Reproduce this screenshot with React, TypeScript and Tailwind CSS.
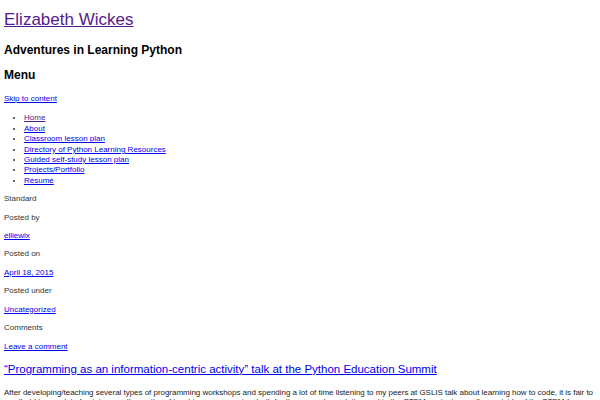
export default function App() {
  const menu = [
    { label: 'Home', visited: true },
    { label: 'About' },
    { label: 'Classroom lesson plan' },
    { label: 'Directory of Python Learning Resources' },
    { label: 'Guided self-study lesson plan' },
    { label: 'Projects/Portfolio' },
    { label: 'Résumé' },
  ];

  const meta = [
    { label: 'Posted by', link: 'elliewix' },
    { label: 'Posted on', link: 'April 18, 2015' },
    { label: 'Posted under', link: 'Uncategorized' },
    { label: 'Comments', link: 'Leave a comment' },
  ];

  return (
    <div className="w-[600px] h-[400px] overflow-hidden bg-white px-1 text-[8px] leading-[10.4px] text-[#333] font-['Liberation_Sans',Arial,sans-serif]">
      <header>
        <h1 className="mt-[9px] text-[17px] leading-[22px]">
          <a href="#" className="text-[#551a8b] underline">Elizabeth Wickes</a>
        </h1>
        <h2 className="mt-[12px] text-[12px] leading-[15px] font-bold text-black">Adventures in Learning Python</h2>
        <h3 className="mt-[10px] text-[12px] leading-[15px] font-bold text-black">Menu</h3>
        <p className="mt-[11px]">
          <a href="#" className="text-[#0000ee] underline">Skip to content</a>
        </p>
        <ul className="mt-[9px] mb-2 pl-[20px] list-disc">
          {menu.map((m) => (
            <li key={m.label}>
              <a href="#" className={m.visited ? 'text-[#551a8b] underline' : 'text-[#0000ee] underline'}>
                {m.label}
              </a>
            </li>
          ))}
        </ul>
      </header>

      <article>
        <p className="my-2">Standard</p>
        {meta.map((m) => (
          <div key={m.label}>
            <p className="my-2">{m.label}</p>
            <p className="my-2">
              <a href="#" className="text-[#0000ee] underline">{m.link}</a>
            </p>
          </div>
        ))}
        <h2 className="mt-[10px] text-[11.5px] leading-[14px]">
          <a href="#" className="text-[#0000ee] underline">
            “Programming as an information-centric activity” talk at the Python Education Summit
          </a>
        </h2>
        <p className="mt-[12px] -mr-1 leading-[9.5px] tracking-[-0.03px] text-[#222]">
          After developing/teaching several types of programming workshops and spending a lot of time listening to my peers at GSLIS talk about learning how to code, it is fair to say that I have a lot of opinions on the matter of teaching programming, both for the general population and in the STEM context as well as outside of the STEM focus. Additionally, I do think that there is a lot to be said for the design of learning experiences.
        </p>
      </article>
    </div>
  );
}
